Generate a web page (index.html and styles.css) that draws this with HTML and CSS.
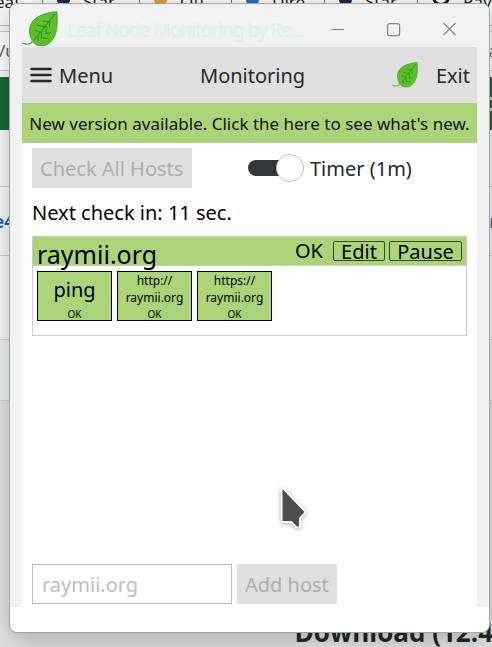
FILE: index.html
```html
<!DOCTYPE html>
<html lang="en">
<head>
<meta charset="utf-8">
<title>Leaf Node Monitoring</title>
<link rel="stylesheet" href="styles.css">
</head>
<body>
<svg class="defs" width="0" height="0" aria-hidden="true">
  <symbol id="leaf" viewBox="0 0 36 36">
    <path d="M.5 32c2.500 1.600 5 1.400 7.500.6 2.600-.8 2.500-2.200 1.300-2.700" fill="none" stroke="#45a044" stroke-width="1.200"/>
    <path d="M35 .7C25 1 12 5 8.500 14c-2.500 7 0 13 3.500 18 3 3.500 11 3.600 15 .5C36 25 35.500 13 35 .7z" fill="#5bc126" stroke="#319a38" stroke-width=".8"/>
    <path d="M33 3 12 29M27.500 10v6.500M27.500 11l-7-1M24 14.500v8l5-1M23 16l-8-2M19.500 20v7l6 .5M18.500 21.500l-6-2.500M15.500 25l1 5" fill="none" stroke="#328c22" stroke-width="1.100"/>
  </symbol>
</svg>
<div class="desktop">
  <div class="browser">
    <div class="tabs">
      <span class="tab"><b>eaf</b></span>
      <span class="tab"><i class="fav navy"></i><b>Star</b></span>
      <span class="tab"><i class="fav orange"></i><b>Off</b></span>
      <span class="tab"><i class="fav blue"></i><b>Dire</b></span>
      <span class="tab"><i class="fav navy"></i><b>Star</b></span>
      <span class="tab"><i class="fav ring"></i><b>Ray</b></span>
    </div>
    <div class="address"><span>/u</span><span>a</span></div>
    <div class="gap"></div>
    <div class="banner"><i></i></div>
    <div class="row row-a"></div>
    <div class="row row-b"><span>e4</span><span>r</span></div>
    <div class="row row-c"></div>
    <div class="row row-d"></div>
    <div class="rest"><h2>Download (12.4</h2></div>
  </div>

  <div class="window">
    <div class="titlebar">
      <svg class="app-icon"><use href="#leaf"/></svg>
      <span class="title">Leaf Node Monitoring by Re...</span>
      <svg class="controls" width="126" height="16" viewBox="0 0 126 16" fill="none" stroke="#858585" stroke-width="1.200">
        <path d="M.5 8.500H13M112.500 2l12 12M124.500 2l-12 12"/>
        <rect x="56.600" y="2.600" width="12" height="12" rx="2"/>
      </svg>
    </div>
    <div class="client">
      <div class="toolbar">
        <svg class="burger" width="22" height="16" viewBox="0 0 22 16"><path d="M1.500 2h19M1.500 8h19M1.500 14h19" stroke="#28282a" stroke-width="2.600" stroke-linecap="round"/></svg>
        <span class="menu">Menu</span>
        <span class="heading">Monitoring</span>
        <svg class="tool-icon"><use href="#leaf"/></svg>
        <span class="exit">Exit</span>
      </div>
      <div class="notice"><span>New version available. Click the here to see what's new.</span></div>
      <div class="content">
        <div class="actions">
          <div class="button check">Check All Hosts</div>
          <div class="switch"><i></i></div>
          <span class="timer">Timer (1m)</span>
        </div>
        <div class="next">Next check in: 11 sec.</div>
        <div class="host">
          <div class="host-head">
            <span class="host-name">raymii.org</span>
            <span class="status">OK</span>
            <span class="small-button edit">Edit</span>
            <span class="small-button pause">Pause</span>
          </div>
          <div class="checks">
            <div class="check-card"><span class="big">ping</span><small>OK</small></div>
            <div class="check-card"><span>http://<br>raymii.org</span><small>OK</small></div>
            <div class="check-card"><span>https://<br>raymii.org</span><small>OK</small></div>
          </div>
        </div>
        <div class="add">
          <div class="field">raymii.org</div>
          <div class="button">Add host</div>
        </div>
      </div>
    </div>
  </div>
  <svg class="cursor" width="34" height="50" viewBox="0 0 34 50"><path d="M6.500 8v32h9l5.500 5.500h2V37l5.500-6z" fill="#4d4d4d" stroke="#fff" stroke-width="3.500" stroke-linejoin="round" paint-order="stroke"/></svg>
</div>
</body>
</html>
```

FILE: styles.css
```css
* { box-sizing: border-box; }
body { margin: 0; overflow: hidden; font-family: "Noto Sans", sans-serif; font-size: 20px; color: #26282a; white-space: nowrap; }
.defs { position: absolute; }
.desktop { position: relative; display: grid; width: 492px; height: 647px; overflow: hidden; }
.browser, .window { grid-area: 1 / 1; min-width: 0; }
.browser { display: flex; flex-direction: column; background: #f7f8f8; overflow: hidden; }
.browser > * { flex: none; }

.tabs { display: grid; grid-template-columns: 43px 97px 92px 93px 93px 74px; height: 26px; border-bottom: 1px solid #b8b8b8; background: #f8f8f8; }
.tab { display: flex; gap: 18px; height: 12px; border-right: 1px solid #777; padding-left: 14px; }
.tab:first-child { padding-left: 0; }
.tab:last-child { border: 0; }
.tab b { font-size: 17px; font-weight: 400; line-height: 24px; margin-top: -10px; color: #222; margin-left: -5px; }
.fav { width: 13px; height: 14px; margin-top: -9px; flex: none; background: #17264f; border-radius: 0 0 5px 5px; }
.orange { background: #e09a35; }
.blue { background: #1672bd; }
.ring { background: none; border: 3px solid #222; border-radius: 50%; width: 18px; height: 18px; margin-top: -12px; }
.address { display: flex; justify-content: space-between; align-items: center; margin-top: 5px; line-height: 38px; font-size: 17px; color: #666; background: #fff; border: solid #ccc; border-width: 1px 0; height: 40px; }
.address span:first-child { margin-left: -1px; }
.address span:last-child { margin-right: -6px; }
.gap { height: 6px; }
.banner { height: 53px; background: #166c39; display: flex; justify-content: flex-end; align-items: center; }
.banner i { width: 3px; height: 14px; border: solid #c5d9cc; border-width: 3px 0; }
.row { border-bottom: 1px solid #cfcfcf; }
.row-a { height: 57px; }
.row-b { height: 69px; display: flex; justify-content: space-between; align-items: center; color: #1765b5; font-weight: 700; font-size: 17px; }
.row-b span:first-child { margin-left: -6px; }
.row-b span:last-child { margin-right: -5px; }
.row-c { height: 84px; }
.row-d { height: 61px; background: #f0f2f2; }
.rest { height: 246px; background: #e4e4e4; display: flex; align-items: flex-end; justify-content: flex-end; }
.rest h2 { margin: 0 -1px -3px 0; font-family: "Open Sans", sans-serif; font-size: 26px; line-height: 36px; color: #24272b; }

.window { width: 481px; height: 630px; margin: 3px 0 0 9px; border: 1px solid #a3a3a3; border-radius: 8px; background: #fff; overflow: hidden; display: flex; flex-direction: column; box-shadow: 0 8px 24px rgba(0,0,0,.24); }
.titlebar { height: 43px; flex: none; background: #f2f2f2; display: flex; align-items: center; padding: 6px 20px 0 12px; }
.app-icon { width: 36px; height: 36px; flex: none; }
.title { width: 248px; margin: 3px 0 0 9px; font-size: 19px; line-height: 28px; letter-spacing: -.97px; color: #d9f3f5; text-shadow: -.5px 0 #f7efd7; }
.controls { margin: 0 0 0 16px; flex: none; }
.client { height: 560px; border: solid #f1f1f1; border-width: 0 12px; flex: none; }
.toolbar { height: 56px; display: flex; align-items: center; background: #e0e0e0; padding: 0 7px 0 8px; }
.burger { flex: none; margin-top: -1px; }
.menu { margin-left: 7px; width: 141px; }
.heading { width: 192px; }
.tool-icon { width: 26px; height: 26px; flex: none; }
.exit { margin-left: auto; }
.notice { height: 40px; padding-top: 1px; display: flex; align-items: center; justify-content: center; background: #abd478; color: #111; font-size: 17px; }
.content { height: 464px; padding: 5px 10px 3px; display: flex; flex-direction: column; color: #000; }
.actions { display: flex; align-items: center; height: 40px; }
.button { height: 40px; line-height: 41px; padding: 0 8px; background: #e0e0e0; color: #adaead; }
.check { width: 160px; }
.switch { width: 44px; height: 16px; margin: 0 12px 0 56px; display: flex; align-items: center; background: #353637; border-radius: 8px; }
.switch i { width: 28px; height: 28px; flex: none; margin-left: 28px; background: #fff; border: 1px solid #bdbdbd; border-radius: 50%; }
.timer { margin-left: 6px; color: #26282a; }
.next { margin-top: 11px; line-height: 28px; height: 28px; }
.host { height: 100px; margin-top: 9px; border: 1px solid #ccc; }
.host-head { height: 29px; background: #abd478; border-bottom: 1px solid #ccc; display: flex; align-items: flex-start; padding: 4px 4px 0; }
.host-name { font-size: 25px; line-height: 28px; margin-top: -1px; width: 258px; }
.status { line-height: 22px; margin-top: -1px; width: 38px; }
.small-button { height: 20px; line-height: 20px; border: 1px solid #37452a; border-radius: 2px; text-align: center; }
.edit { width: 52px; }
.pause { width: 73px; margin-left: 4px; }
.checks { display: flex; gap: 5px; padding: 5px 4px; }
.check-card { width: 75px; height: 50px; border: 1px solid #000; background: #abd478; text-align: center; font-size: 12px; line-height: 17px; display: flex; flex-direction: column; justify-content: space-between; }
.check-card .big { font-size: 20px; line-height: 36px; }
.check-card small { font-size: 10px; line-height: 12px; }
.add { margin-top: auto; display: flex; gap: 5px; }
.field { width: 200px; height: 40px; border: 1px solid #bdbdbd; padding: 0 9px; line-height: 39px; color: #bdbebd; }
.cursor { position: absolute; left: 276px; top: 481px; filter: drop-shadow(0 1px 2px rgba(0,0,0,.35)); }
```
